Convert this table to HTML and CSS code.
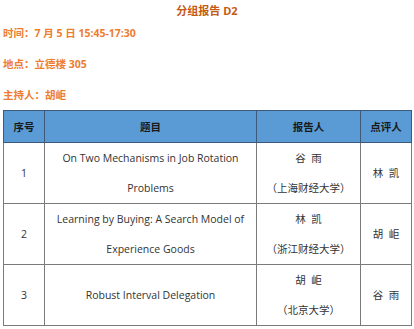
FILE: index.html
```html
<!DOCTYPE html>
<html lang="zh">
<head>
<meta charset="utf-8">
<link rel="stylesheet" href="styles.css">
</head>
<body>
<div class="page">
  <h1 class="title">分组报告 D2</h1>
  <p class="info">时间：7 月 5 日 15:45-17:30</p>
  <p class="info">地点：立德楼 305</p>
  <p class="info">主持人：胡岠</p>
  <table class="sched">
    <colgroup>
      <col class="c1"><col class="c2"><col class="c3"><col class="c4">
    </colgroup>
    <thead>
      <tr><th>序号</th><th>题目</th><th>报告人</th><th>点评人</th></tr>
    </thead>
    <tbody>
      <tr>
        <td>1</td>
        <td><div class="two">On Two Mechanisms in Job Rotation<br>Problems</div></td>
        <td><div class="two">谷&nbsp;&nbsp;雨<br>（上海财经大学）</div></td>
        <td>林&nbsp;&nbsp;凯</td>
      </tr>
      <tr>
        <td>2</td>
        <td><div class="two">Learning by Buying: A Search Model of<br>Experience Goods</div></td>
        <td><div class="two">林&nbsp;&nbsp;凯<br>（浙江财经大学）</div></td>
        <td>胡&nbsp;&nbsp;岠</td>
      </tr>
      <tr>
        <td>3</td>
        <td>Robust Interval Delegation</td>
        <td><div class="two">胡&nbsp;&nbsp;岠<br>（北京大学）</div></td>
        <td>谷&nbsp;&nbsp;雨</td>
      </tr>
    </tbody>
  </table>
</div>
</body>
</html>
```
FILE: styles.css
```css
html, body {
  margin: 0;
  padding: 0;
  background: #ffffff;
}
.page {
  padding: 0 3px;
  font-family: "Open Sans", "Noto Sans CJK SC", sans-serif;
}
.title {
  margin: 0;
  height: 22px;
  line-height: 22px;
  text-align: center;
  font-size: 11px;
  font-weight: 700;
  color: #c55a11;
}
.info {
  margin: 0;
  height: 31px;
  line-height: 22px;
  font-size: 10.5px;
  font-weight: 700;
  color: #ed7d31;
}
.info:last-of-type {
  height: 26px;
}
.sched {
  border-collapse: collapse;
  width: 408px;
  table-layout: fixed;
  border-top: 1px solid #e6e6e6;
}
.c1 { width: 41px; }
.c2 { width: 212px; }
.c3 { width: 104px; }
.c4 { width: 51px; }
.sched th {
  background: #5b9bd5;
  height: 31px;
  padding: 0;
  font-size: 10.5px;
  font-weight: 700;
  color: #1a1a1a;
  border: 1px solid #3d5a7a;
  text-align: center;
}
.sched td {
  height: 60px;
  padding: 0;
  font-size: 10.5px;
  color: #333333;
  border: 1px solid #7a7a7a;
  text-align: center;
  vertical-align: middle;
  line-height: 30px;
}
.two {
  line-height: 30px;
}
```
